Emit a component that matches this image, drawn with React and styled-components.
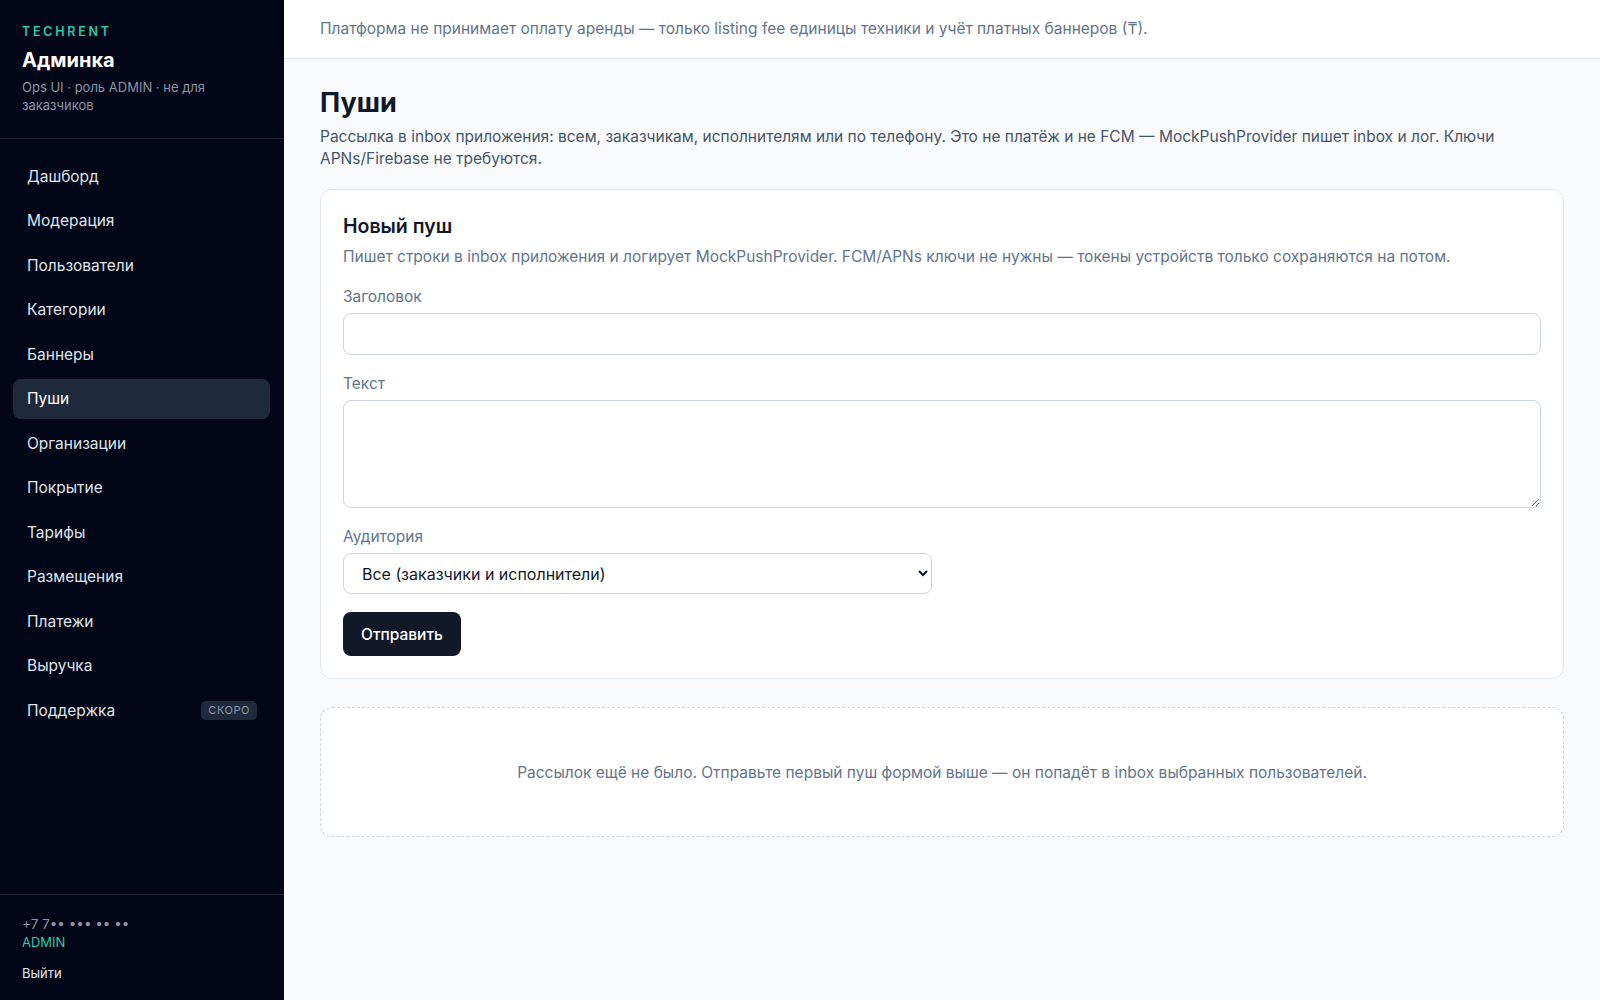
import React from 'react'
import styled, { createGlobalStyle } from 'styled-components'

const GlobalStyle = createGlobalStyle`
  * { box-sizing: border-box; }
  body {
    margin: 0;
    font-family: Inter, 'Noto Sans', 'Liberation Sans', sans-serif;
    background: #f8fafc;
    color: #0f172a;
  }
`

const Layout = styled.div`
  display: flex;
  min-height: 100vh;
`

const Sidebar = styled.aside`
  width: 284px;
  flex-shrink: 0;
  background: #030617;
  display: flex;
  flex-direction: column;
`

const Brand = styled.div`
  padding: 24px 22px 24px;
  border-bottom: 1px solid #1e2535;
`

const BrandMark = styled.div`
  font-size: 12.5px;
  line-height: 16px;
  font-weight: 600;
  letter-spacing: 0.22em;
  color: #2cc9aa;
`

const BrandTitle = styled.div`
  margin-top: 7px;
  font-size: 20px;
  line-height: 26px;
  font-weight: 700;
  color: #fff;
`

const BrandNote = styled.div`
  margin-top: 5px;
  font-size: 13px;
  line-height: 18px;
  color: #8b95a7;
`

const Nav = styled.nav`
  display: flex;
  flex-direction: column;
  gap: 4.5px;
  padding: 17px 14px 0 13px;
`

const NavItem = styled.a`
  display: flex;
  align-items: center;
  justify-content: space-between;
  height: 40px;
  padding: 0 13px 0 14px;
  border-radius: 8px;
  font-size: 15.5px;
  color: ${p => (p.active ? '#fff' : '#dfe4ec')};
  background: ${p => (p.active ? '#1e293b' : 'transparent')};
  text-decoration: none;
  cursor: pointer;
`

const SoonBadge = styled.span`
  padding: 2px 7px;
  border-radius: 5px;
  background: #1e293b;
  color: #8b95a7;
  font-size: 11px;
  line-height: 15px;
  letter-spacing: 0.05em;
  text-transform: uppercase;
`

const Account = styled.div`
  margin-top: auto;
  padding: 20px 22px 18px;
  border-top: 1px solid #1e2535;
`

const Phone = styled.div`
  font-size: 13.5px;
  line-height: 18px;
  color: #8b95a7;
`

const Role = styled.div`
  font-size: 13px;
  line-height: 18px;
  color: #2cc9aa;
`

const Logout = styled.a`
  display: block;
  margin-top: 13px;
  font-size: 13px;
  line-height: 18px;
  color: #e2e8f0;
  cursor: pointer;
`

const Main = styled.main`
  flex: 1;
  min-width: 0;
  display: flex;
  flex-direction: column;
`

const TopBar = styled.header`
  background: #fff;
  border-bottom: 1px solid #e2e8f0;
  padding: 18px 36px;
  font-size: 15.5px;
  line-height: 22px;
  color: #64748b;
`

const Content = styled.div`
  padding: 28px 36px 40px;
`

const PageTitle = styled.h1`
  margin: 0;
  font-size: 27px;
  line-height: 32px;
  font-weight: 700;
  color: #0f172a;
`

const PageLead = styled.p`
  margin: 7px 0 0;
  font-size: 15.5px;
  line-height: 22px;
  color: #475569;
`

const Card = styled.section`
  margin-top: 19px;
  background: #fff;
  border: 1px solid #e2e8f0;
  border-radius: 12px;
  padding: 22px;
`

const CardTitle = styled.h2`
  margin: 0;
  font-size: 19.5px;
  line-height: 28px;
  font-weight: 600;
  color: #0f172a;
`

const CardLead = styled.p`
  margin: 6px 0 0;
  font-size: 15.5px;
  line-height: 22px;
  color: #64748b;
`

const Form = styled.form`
  display: flex;
  flex-direction: column;
  align-items: flex-start;
  gap: 19px;
  margin-top: 19px;
`

const Field = styled.label`
  display: flex;
  flex-direction: column;
  gap: 6px;
  width: ${p => p.width || '100%'};
`

const FieldLabel = styled.span`
  font-size: 15.5px;
  line-height: 20px;
  color: #64748b;
`

const Input = styled.input`
  height: 42px;
  padding: 0 14px;
  border: 1px solid #cbd5e1;
  border-radius: 8px;
  background: #fff;
  font: inherit;
  font-size: 15.5px;
  outline: none;
`

const TextArea = styled.textarea`
  height: 108px;
  padding: 10px 14px;
  border: 1px solid #cbd5e1;
  border-radius: 8px;
  background: #fff;
  font: inherit;
  font-size: 15.5px;
  outline: none;
  resize: vertical;
`

const Select = styled.select`
  height: 41px;
  padding: 0 10px 0 14px;
  border: 1px solid #cbd5e1;
  border-radius: 8px;
  background: #fff;
  color: #0f172a;
  font-family: inherit;
  font-size: 16px;
  outline: none;
`

const SubmitButton = styled.button`
  margin-top: -1px;
  height: 44px;
  padding: 0 18px;
  border: none;
  border-radius: 8px;
  background: #111827;
  color: #fff;
  font-family: inherit;
  font-size: 15.5px;
  font-weight: 500;
  cursor: pointer;
`

const EmptyState = styled.div`
  margin-top: 28px;
  height: 130px;
  display: flex;
  align-items: center;
  justify-content: center;
  border: 1px dashed #cbd5e1;
  border-radius: 12px;
  background: #fff;
  font-size: 15.5px;
  color: #64748b;
`

const navItems = [
  'Дашборд',
  'Модерация',
  'Пользователи',
  'Категории',
  'Баннеры',
  'Пуши',
  'Организации',
  'Покрытие',
  'Тарифы',
  'Размещения',
  'Платежи',
  'Выручка',
  'Поддержка',
]

export default function App () {
  return (
    <Layout>
      <GlobalStyle />
      <Sidebar>
        <Brand>
          <BrandMark>TECHRENT</BrandMark>
          <BrandTitle>Админка</BrandTitle>
          <BrandNote>Ops UI · роль ADMIN · не для заказчиков</BrandNote>
        </Brand>
        <Nav>
          {navItems.map(item => (
            <NavItem key={item} active={item === 'Пуши'}>
              {item}
              {item === 'Поддержка' && <SoonBadge>Скоро</SoonBadge>}
            </NavItem>
          ))}
        </Nav>
        <Account>
          <Phone>+7 7•• ••• •• ••</Phone>
          <Role>ADMIN</Role>
          <Logout>Выйти</Logout>
        </Account>
      </Sidebar>

      <Main>
        <TopBar>
          Платформа не принимает оплату аренды — только listing fee единицы техники и учёт платных баннеров (₸).
        </TopBar>
        <Content>
          <PageTitle>Пуши</PageTitle>
          <PageLead>
            Рассылка в inbox приложения: всем, заказчикам, исполнителям или по телефону. Это не платёж и не FCM — MockPushProvider пишет inbox и лог. Ключи APNs/Firebase не требуются.
          </PageLead>

          <Card>
            <CardTitle>Новый пуш</CardTitle>
            <CardLead>
              Пишет строки в inbox приложения и логирует MockPushProvider. FCM/APNs ключи не нужны — токены устройств только сохраняются на потом.
            </CardLead>
            <Form onSubmit={e => e.preventDefault()}>
              <Field>
                <FieldLabel>Заголовок</FieldLabel>
                <Input type='text' />
              </Field>
              <Field>
                <FieldLabel>Текст</FieldLabel>
                <TextArea />
              </Field>
              <Field width='589px'>
                <FieldLabel>Аудитория</FieldLabel>
                <Select defaultValue='all'>
                  <option value='all'>Все (заказчики и исполнители)</option>
                  <option value='customers'>Заказчики</option>
                  <option value='executors'>Исполнители</option>
                  <option value='phone'>По телефону</option>
                </Select>
              </Field>
              <SubmitButton type='submit'>Отправить</SubmitButton>
            </Form>
          </Card>

          <EmptyState>
            Рассылок ещё не было. Отправьте первый пуш формой выше — он попадёт в inbox выбранных пользователей.
          </EmptyState>
        </Content>
      </Main>
    </Layout>
  )
}
